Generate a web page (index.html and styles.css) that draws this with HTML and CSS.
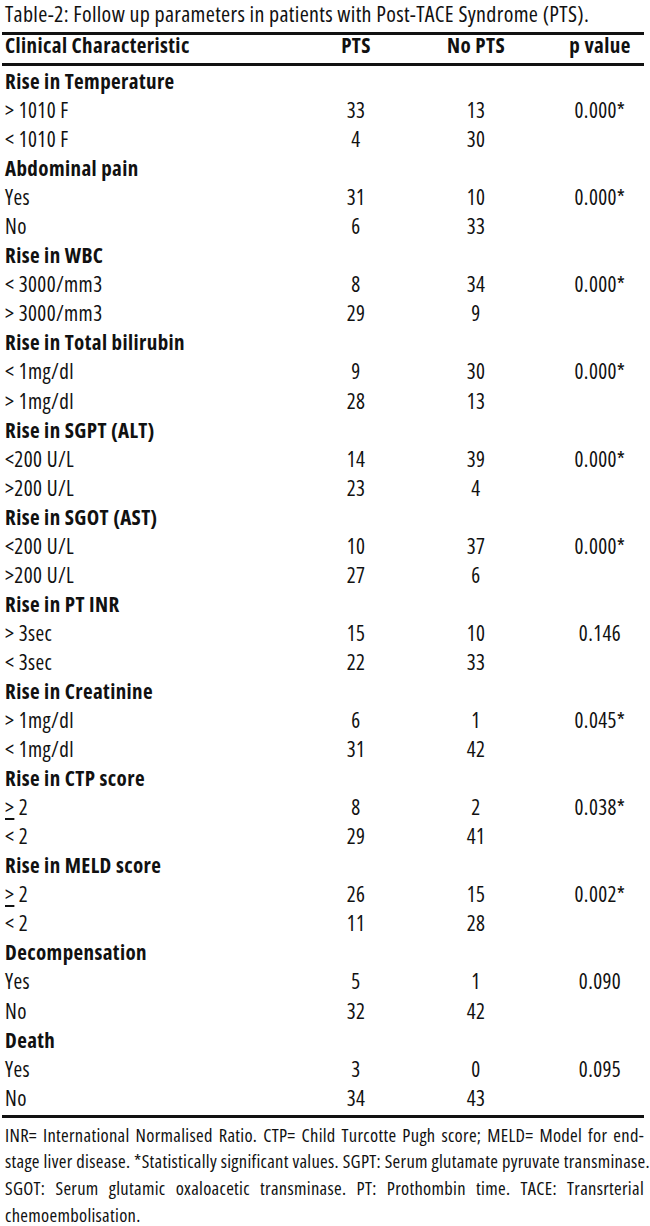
FILE: index.html
```html
<!DOCTYPE html>
<html lang="en">
<head>
<meta charset="utf-8">
<title>Table-2</title>
<link rel="stylesheet" href="styles.css">
</head>
<body>
<div class="page">
  <p class="caption">Table-2: Follow up parameters in patients with Post-TACE Syndrome (PTS).</p>
  <div class="table">
    <div class="row head"><span class="c1">Clinical Characteristic</span><span>PTS</span><span>No PTS</span><span>p value</span></div>
    <div class="body">
      <div class="row group"><span class="c1">Rise in Temperature</span></div>
      <div class="row"><span class="c1">&gt; 1010 F</span><span>33</span><span>13</span><span>0.000*</span></div>
      <div class="row"><span class="c1">&lt; 1010 F</span><span>4</span><span>30</span><span></span></div>
      <div class="row group"><span class="c1">Abdominal pain</span></div>
      <div class="row"><span class="c1">Yes</span><span>31</span><span>10</span><span>0.000*</span></div>
      <div class="row"><span class="c1">No</span><span>6</span><span>33</span><span></span></div>
      <div class="row group"><span class="c1">Rise in WBC</span></div>
      <div class="row"><span class="c1">&lt; 3000/mm3</span><span>8</span><span>34</span><span>0.000*</span></div>
      <div class="row"><span class="c1">&gt; 3000/mm3</span><span>29</span><span>9</span><span></span></div>
      <div class="row group"><span class="c1">Rise in Total bilirubin</span></div>
      <div class="row"><span class="c1">&lt; 1mg/dl</span><span>9</span><span>30</span><span>0.000*</span></div>
      <div class="row"><span class="c1">&gt; 1mg/dl</span><span>28</span><span>13</span><span></span></div>
      <div class="row group"><span class="c1">Rise in SGPT (ALT)</span></div>
      <div class="row"><span class="c1">&lt;200 U/L</span><span>14</span><span>39</span><span>0.000*</span></div>
      <div class="row"><span class="c1">&gt;200 U/L</span><span>23</span><span>4</span><span></span></div>
      <div class="row group"><span class="c1">Rise in SGOT (AST)</span></div>
      <div class="row"><span class="c1">&lt;200 U/L</span><span>10</span><span>37</span><span>0.000*</span></div>
      <div class="row"><span class="c1">&gt;200 U/L</span><span>27</span><span>6</span><span></span></div>
      <div class="row group"><span class="c1">Rise in PT INR</span></div>
      <div class="row"><span class="c1">&gt; 3sec</span><span>15</span><span>10</span><span>0.146</span></div>
      <div class="row"><span class="c1">&lt; 3sec</span><span>22</span><span>33</span><span></span></div>
      <div class="row group"><span class="c1">Rise in Creatinine</span></div>
      <div class="row"><span class="c1">&gt; 1mg/dl</span><span>6</span><span>1</span><span>0.045*</span></div>
      <div class="row"><span class="c1">&lt; 1mg/dl</span><span>31</span><span>42</span><span></span></div>
      <div class="row group"><span class="c1">Rise in CTP score</span></div>
      <div class="row"><span class="c1"><span class="ge">&gt;</span> 2</span><span>8</span><span>2</span><span>0.038*</span></div>
      <div class="row"><span class="c1">&lt; 2</span><span>29</span><span>41</span><span></span></div>
      <div class="row group"><span class="c1">Rise in MELD score</span></div>
      <div class="row"><span class="c1"><span class="ge">&gt;</span> 2</span><span>26</span><span>15</span><span>0.002*</span></div>
      <div class="row"><span class="c1">&lt; 2</span><span>11</span><span>28</span><span></span></div>
      <div class="row group"><span class="c1">Decompensation</span></div>
      <div class="row"><span class="c1">Yes</span><span>5</span><span>1</span><span>0.090</span></div>
      <div class="row"><span class="c1">No</span><span>32</span><span>42</span><span></span></div>
      <div class="row group"><span class="c1">Death</span></div>
      <div class="row"><span class="c1">Yes</span><span>3</span><span>0</span><span>0.095</span></div>
      <div class="row"><span class="c1">No</span><span>34</span><span>43</span><span></span></div>
    </div>
  </div>
  <div class="notes">
    <span class="line">INR= International Normalised Ratio. CTP= Child Turcotte Pugh score; MELD= Model for end-</span>
    <span class="line">stage liver disease. *Statistically significant values. SGPT: Serum glutamate pyruvate transminase.</span>
    <span class="line">SGOT: Serum glutamic oxaloacetic transminase. PT: Prothombin time. TACE: Transrterial</span>
    <span class="line last">chemoembolisation.</span>
  </div>
</div>
</body>
</html>
```

FILE: styles.css
```css
html, body {
  margin: 0;
  padding: 0;
  background: #ffffff;
}

body {
  font-family: "Open Sans", "Liberation Sans", sans-serif;
  font-stretch: 75%;
  color: #111111;
}

.page {
  width: 642px;
  padding: 0 0 0 2px;
}

.caption {
  margin: 0 0 6px 0;
  padding-left: 3px;
  font-size: 22px;
  line-height: 26px;
  height: 26px;
  letter-spacing: 0.33px;
  white-space: nowrap;
}

.table {
  border-top: 3px solid #111111;
  border-bottom: 3px solid #111111;
}

.row {
  display: grid;
  grid-template-columns: 314px 80px 160px 88px;
  font-size: 21px;
  line-height: 29.05px;
  height: 29.05px;
  letter-spacing: 0.4px;
  white-space: nowrap;
}

.row > span {
  text-align: center;
}

.row > .c1 {
  text-align: left;
  padding-left: 3px;
}

.head {
  font-weight: bold;
  line-height: 20px;
  height: 20px;
  padding-bottom: 8px;
  border-bottom: 3px solid #111111;
}

.body {
  padding: 1px 0 2.6px 0;
}

.group {
  font-weight: bold;
}

.ge {
  text-decoration: underline;
  text-underline-offset: 3px;
}

.notes {
  margin-top: 3.5px;
  font-size: 18.5px;
  line-height: 26.7px;
  letter-spacing: 0.3px;
}

.notes .line {
  display: block;
  padding-left: 3px;
  text-align: justify;
  text-align-last: justify;
  white-space: nowrap;
}

.notes .line.last {
  text-align-last: left;
}
```
